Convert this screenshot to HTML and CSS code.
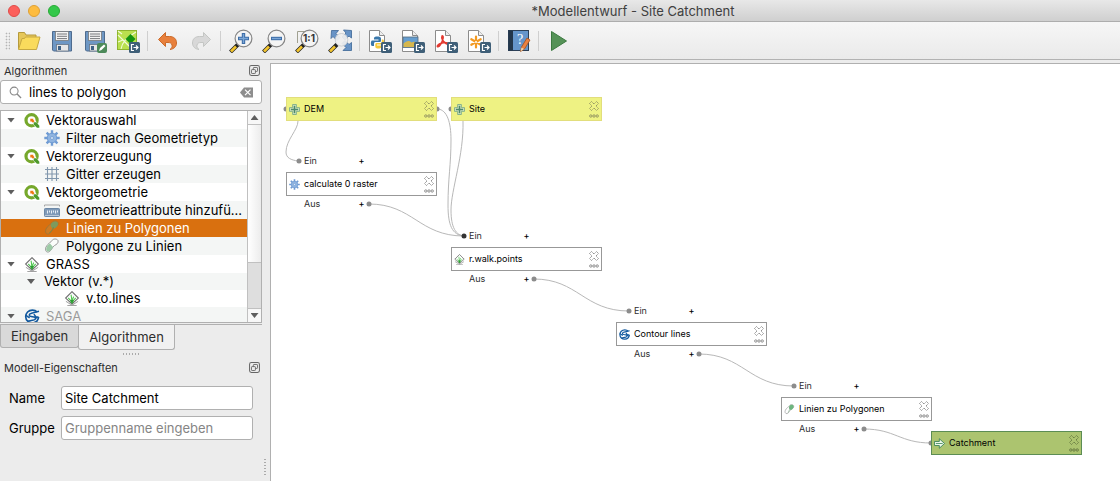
FILE: index.html
```html
<!DOCTYPE html>
<html lang="de">
<head>
<meta charset="utf-8">
<title>Modellentwurf - Site Catchment</title>
<link rel="stylesheet" href="styles.css">
</head>
<body>
<svg class="defs" aria-hidden="true">
  <defs>
    <symbol id="i-qgis" viewBox="0 0 14 14">
      <circle cx="6.6" cy="6.8" r="5.2" fill="none" stroke="#76a82c" stroke-width="3"/>
      <path d="M6.5 6.5h3.2l4.1 5.2v2h-2.6L6.5 9.2z" fill="#fff"/>
      <path d="M8.6 8.6h2.6l2.6 3.2v1.9h-2.2L8.6 10.8z" fill="#4f9a2c"/>
      <path d="M5.4 5.4h2.8v1l1.2 1.2-1.5 1.5-1.2-1.2H5.4z" fill="#ee7913"/>
    </symbol>
    <symbol id="i-gear" viewBox="0 0 16 16">
      <path d="M8 .3v15.400M.3 8h15.400M2.600 2.600l10.800 10.800M13.400 2.600L2.600 13.400" stroke="#6f9bd3" stroke-width="2.400"/>
      <circle cx="8" cy="8" r="4.800" fill="#8fb4e0" stroke="#6f9bd3"/>
      <circle cx="8" cy="8" r="1.500" fill="#d8e6f6" stroke="#6a97cf" stroke-width=".7"/>
    </symbol>
    <symbol id="i-grid" viewBox="0 0 16 16">
      <path d="M3.500 1v14M8 1v14M12.500 1v14M1 3.500h14M1 8h14M1 12.500h14" stroke="#8197ad" stroke-width="1.100" fill="none"/>
    </symbol>
    <symbol id="i-ruler" viewBox="0 0 16 16">
      <path d="M.5 4.500v-1.500h15v1.500" fill="none" stroke="#a5a5a5"/>
      <rect x=".5" y="6.500" width="15" height="8" rx=".8" fill="#7f9ab8" stroke="#6c88a6"/>
      <path d="M3.500 8.500v3M5.500 8.500v2M7.500 8.500v3M9.500 8.500v2M11.500 8.500v3M13.500 8.500v2" stroke="#f2f6fa" stroke-width=".9"/>
      <path d="M1 13.500h14" stroke="#b9c8d8"/>
    </symbol>
    <symbol id="i-line2poly" viewBox="0 0 16 16">
      <path d="M2 9c2-4 5-4.500 6-6.500 1-2 5-2 6 0 .8 2.500-1.500 4-3.500 5C8 9 7.500 13 4.500 14 2 14.500.8 12 2 9z" fill="#fff" stroke="#9a9a9a"/>
      <path d="M7.500 3.500c1-3 5.700-3 6.500-.5.800 2.500-1.500 4.500-3.500 5.600C8.500 8.500 6.500 6.500 7.500 3.500z" fill="#6db67f"/>
      <path d="M8 4.500C8.500 7 8 9 6 12.500" fill="none" stroke="#78a77e" stroke-width=".8"/>
    </symbol>
    <symbol id="i-line2poly-sel" viewBox="0 0 16 16">
      <path d="M2 9c2-4 5-4.500 6-6.500 1-2 5-2 6 0 .8 2.500-1.500 4-3.500 5C8 9 7.500 13 4.500 14 2 14.500.8 12 2 9z" fill="#cf7b23" stroke="#a37634"/>
      <path d="M7 4c1-3 6.200-3.500 7-1 .5 2.500-1.500 4.500-3.500 5.600C8.500 8.500 6 7 7 4z" fill="#7c9a5e"/>
      <path d="M9.500 7c-1 3-2.500 4-4 6" stroke="#7a8a48" fill="none"/>
    </symbol>
    <symbol id="i-poly2line" viewBox="0 0 16 16">
      <path d="M2 9c2-4 5-4.500 6-6.500 1-2 5-2 6 0 .8 2.500-1.500 4-3.500 5C8 9 7.500 13 4.500 14 2 14.500.8 12 2 9z" fill="#fbfdfb" stroke="#9a9a9a"/>
      <path d="M2.500 9.500C3.500 7 5 6 6 5.500L9 9c-1 2-2 4-4.500 4.500-2 .3-3-2-2-4z" fill="#9ccaa6"/>
    </symbol>
    <symbol id="i-grass" viewBox="0 0 16 16">
      <path d="M1.500 11l6.500 4.200 6.500-4.200M3 15.500h10" fill="none" stroke="#9a9a9a" stroke-width="1"/>
      <path d="M8 .7L14.800 7.500 8 13.800 1.200 7.500z" fill="#fbfbfb" stroke="#6a6a6a" stroke-width="1.100"/>
      <path d="M8 13C7.700 9 7.500 6 7 4M8 13c0-4 .8-5.500 1.800-7M8 13C6.500 10 5.500 8.500 4 7.500M8 13c1.500-3 2.500-4.500 4-5.500" fill="none" stroke="#4cc64c" stroke-width="1.100"/>
      <path d="M6 9.500h4l-2 4z" fill="#2d9b35"/>
    </symbol>
    <symbol id="i-saga" viewBox="0 0 16 16">
      <path d="M13.500 3.200C11 .6 6 .5 3.300 3.200.6 6 .7 10.500 3.400 13c2.700 2.600 7.500 2.500 10-.3 1-1.200 1.500-2.500 1.600-4.200" fill="none" stroke="#12599f" stroke-width="1.800"/>
      <path d="M15.500 2.500L7.500 4.500C4 5.500 4.500 7.500 7 8l3 .6c2.500.7 2.300 2.600-.3 3.200L3.500 13M1 6.500l4.500 3M10 5.500l3.500 4.500M8.500 8.500H15" fill="none" stroke="#12599f" stroke-width="1.600"/>
    </symbol>
    <symbol id="i-plus" viewBox="0 0 12 12">
      <path d="M4 .5h4V4h3.500v4H8v3.500H4V8H.5V4H4z" fill="#dcebc4" stroke="#6fa487" stroke-width=".9"/>
      <path d="M6 2v8M2 6h8" stroke="#4c886c" stroke-width="1.700"/>
    </symbol>
    <symbol id="i-arrow" viewBox="0 0 12 12">
      <path d="M.5 3.800h5.300V.8L11.500 6l-5.700 5.200v-3H.5z" fill="#eef7ea" stroke="#3f8659" stroke-width="1"/>
      <path d="M2 6h7.500" fill="none" stroke="#4f9468" stroke-width="1"/>
    </symbol>
    <symbol id="i-cross" viewBox="0 0 10 10">
      <path d="M2.500.5L5 3 7.500.5l2 2L7 5l2.500 2.500-2 2L5 7 2.500 9.500l-2-2L3 5 .5 2.500z" fill="none" stroke="currentColor" stroke-width=".9" stroke-dasharray="1.500 .5"/>
    </symbol>
    <symbol id="i-dots" viewBox="0 0 10 4">
      <g fill="none" stroke="currentColor" stroke-width=".9"><circle cx="1.800" cy="2" r="1.200"/><circle cx="5" cy="2" r="1.200"/><circle cx="8.200" cy="2" r="1.200"/></g>
    </symbol>
    <symbol id="i-float" viewBox="0 0 12 12">
      <rect x=".6" y=".6" width="10.800" height="10.800" rx="2" fill="none" stroke="#666" stroke-width="1.100"/>
      <rect x="4.700" y="2.700" width="4.600" height="4.300" rx=".7" fill="none" stroke="#666"/>
      <rect x="2.700" y="5" width="4.300" height="4.300" rx=".7" fill="#ececec" stroke="#666"/>
    </symbol>
    <symbol id="i-export" viewBox="0 0 11 11">
      <rect width="11" height="11" rx="1.500" fill="#3f5f78"/>
      <path d="M5 2.500H2.500v6H5M4.500 5.500h4M7 3.500l2 2-2 2" fill="none" stroke="#fff" stroke-width="1.200"/>
    </symbol>
    <symbol id="i-page" viewBox="0 0 24 24">
      <path d="M1.500 1.500h10l5 5v16h-15z" fill="#fff" stroke="#8c8c8c"/>
      <path d="M11.500 1.500v5h5" fill="#eee" stroke="#8c8c8c"/>
    </symbol>
    <symbol id="i-floppy" viewBox="0 0 24 24">
      <path d="M2.500 2.500h19v19.500h-18l-1-1z" fill="#6e97c4" stroke="#4e6b8e"/>
      <rect x="5.500" y="2.500" width="13" height="9" fill="#f3f3f3" stroke="#77797c" stroke-width=".8"/>
      <path d="M7 5h10M7 7.300h10M7 9.600h10" stroke="#77797c"/>
      <rect x="6.500" y="15.500" width="12" height="6.500" fill="#e7e7e7" stroke="#667588" stroke-width=".8"/>
      <rect x="8" y="17" width="3" height="4" fill="#3f6287"/>
    </symbol>
    <symbol id="i-lens" viewBox="0 0 24 24">
      <path d="M9 15.500L1.500 23" stroke="#222" stroke-width="4"/>
      <path d="M7 17.500L2 22.500" stroke="#f3c52e" stroke-width="2.600"/>
      <circle cx="14.500" cy="9.500" r="8.400" fill="#f4f4f4" fill-opacity=".9" stroke="#858585" stroke-width="1.200"/>
    </symbol>
  </defs>
</svg>

<div class="window">
  <header class="titlebar">
    <div class="lights">
      <button class="light light-close" aria-label="Schließen"></button>
      <button class="light light-min" aria-label="Minimieren"></button>
      <button class="light light-max" aria-label="Vergrößern"></button>
    </div>
    <h1 class="title">*Modellentwurf - Site Catchment</h1>
  </header>

  <nav class="toolbar" aria-label="Werkzeuge">
    <span class="handle"></span>
    <button class="tool" aria-label="Öffnen"><svg viewBox="0 0 24 24"><path d="M1.500 20V3.500h6l1.500 2.500h10v4" fill="#e6c75a" stroke="#b59a3c"/><path d="M1.500 20.500L5 9.500h2.500l1-1.500h14.500l-3.500 12.500z" fill="#fadb5c" stroke="#c7a942"/></svg></button>
    <button class="tool" aria-label="Speichern"><svg viewBox="0 0 24 24"><use href="#i-floppy"/></svg></button>
    <button class="tool" aria-label="Speichern als"><svg viewBox="0 0 24 24"><use href="#i-floppy"/><rect x="14" y="14" width="10" height="10" rx="2" fill="#4d8a5a"/><path d="M16 22l1-3 4-3.500 1.500 1.500-4 4z" fill="#fff"/></svg></button>
    <button class="tool" aria-label="Im Projekt speichern"><svg viewBox="0 0 24 24"><rect x="1.500" y="1.500" width="19" height="19" fill="#b9e04e" stroke="#8db32e"/><path d="M2 6l14 14M20 3C13 7 6 12 5 20M2 13l5-2M2 2l4 3" fill="none" stroke="#f2fadb" stroke-width="1.100"/><path d="M14.500 5l5 5-5 5-5-5z" fill="#13930f"/><use href="#i-export" x="13" y="13" width="11" height="11"/></svg></button>
    <span class="sep"></span>
    <button class="tool" aria-label="Rückgängig"><svg viewBox="0 0 24 24"><path d="M2.500 10.500L9.500 3.500v4h4c4.500 0 7 2.500 7 6.500 0 3.500-2.500 6-6.500 6.500 2-1.500 2.500-3 2-4.500-.5-2-2-2.500-4-2.500H9.500v4z" fill="#e8803c" stroke="#cb6a2a"/></svg></button>
    <button class="tool" aria-label="Wiederherstellen"><svg viewBox="0 0 24 24"><path d="M21.500 10.500L14.500 3.500v4h-4c-4.500 0-7 2.500-7 6.500 0 3.500 2.500 6 6.500 6.500-2-1.500-2.500-3-2-4.500.5-2 2-2.500 4-2.500h2.500v4z" fill="#d8d8d8" stroke="#c4c6c4"/></svg></button>
    <span class="sep"></span>
    <button class="tool" aria-label="Hineinzoomen"><svg viewBox="0 0 24 24"><use href="#i-lens"/><path d="M14.500 4v11M9 9.500h11" stroke="#3e6ea8" stroke-width="3.400"/><path d="M14.500 5v9M10 9.500h9" stroke="#7ba6d6" stroke-width="1.300"/></svg></button>
    <button class="tool" aria-label="Herauszoomen"><svg viewBox="0 0 24 24"><use href="#i-lens"/><path d="M9 9.500h11" stroke="#3e6ea8" stroke-width="3.400"/><path d="M10 9.500h9" stroke="#7ba6d6" stroke-width="1.300"/></svg></button>
    <button class="tool" aria-label="Zoom 1:1"><svg viewBox="0 0 24 24"><path d="M2.500 14V2.500H15" fill="none" stroke="#a0a090"/><use href="#i-lens"/><text x="14" y="13" class="ratio">1:1</text></svg></button>
    <button class="tool" aria-label="Volle Ausdehnung"><svg viewBox="0 0 24 24"><path d="M3.500 1.500h7l-2.500 3 4 4-3 3-4-4-2 2zM23.500 1.500v7.500l-2.500-2-4 4-3-3 4-4-2.500-3zM23.500 21.500H15l3-3-4-4 3-3 4 4 2.500-2z" fill="#6793c6" stroke="#476f9d" stroke-width=".9"/><path d="M9 15.500L1.500 23" stroke="#222" stroke-width="4"/><path d="M7 17.500L2 22.500" stroke="#f3c52e" stroke-width="2.600"/><circle cx="13.500" cy="10.800" r="6.300" fill="#efefef" fill-opacity=".92" stroke="#c4c8cc" stroke-width=".8"/></svg></button>
    <span class="sep"></span>
    <button class="tool" aria-label="Als Python exportieren"><svg viewBox="0 0 24 24"><use href="#i-page"/><path d="M9 7.500c-3 0-3 1-3 3h4.500v1H4c-1.500.5-1.500 5 0 5.500h2v-2.500c0-1 .8-1.500 1.500-1.500h4c1 0 1.500-.5 1.500-1.500v-2c0-1.500-1.500-2-4-2z" fill="#3b78ab"/><path d="M10.500 19.500c3 0 3-1 3-3H9v-1h6c1.500-.5 1.500-4.500 0-5h-1.200v2c0 1-.8 1.500-1.500 1.500h-3.500c-1 0-1.500.5-1.500 1.500v2c0 1.500 1 2 3.200 2z" fill="#f5ca3c"/><use href="#i-export" x="13" y="13" width="11" height="11"/></svg></button>
    <button class="tool" aria-label="Als Bild exportieren"><svg viewBox="0 0 24 24"><use href="#i-page"/><rect x="2" y="8" width="15" height="10.500" fill="#669ed0" stroke="#566a7b" stroke-width=".8"/><path d="M2.500 14.500c3-3 6-3.500 8-1 2-1 4-1 6 0V18h-14z" fill="#d6b74d"/><use href="#i-export" x="13" y="13" width="11" height="11"/></svg></button>
    <button class="tool" aria-label="Als PDF exportieren"><svg viewBox="0 0 24 24"><use href="#i-page"/><path d="M8 7c2-1 1.500 4-1.500 8.500-1.500 2.500-4 3-3 1 2-2.500 7-3.500 10-2.500 2 1 .5 2-1.500.7C9 13 7 9 8 7z" fill="none" stroke="#e33a31" stroke-width="1.500"/><use href="#i-export" x="13" y="13" width="11" height="11"/></svg></button>
    <button class="tool" aria-label="Als SVG exportieren"><svg viewBox="0 0 24 24"><use href="#i-page"/><path d="M9 7.500v11M4.300 10.200l9.400 5.600M13.700 10.200l-9.400 5.600" stroke="#f39a22" stroke-width="2.200" stroke-linecap="round"/><circle cx="9" cy="13" r="1" fill="#fff"/><use href="#i-export" x="13" y="13" width="11" height="11"/></svg></button>
    <span class="sep"></span>
    <button class="tool" aria-label="Hilfe bearbeiten"><svg viewBox="0 0 24 24"><rect x="1.500" y="1.500" width="20" height="20" fill="#6595ca" stroke="#2c4058"/><rect x="1.500" y="1.500" width="4.500" height="20" fill="#23364a"/><text x="13" y="15" class="help-mark">?</text><path d="M13.500 22.500l1-4.500 5.500-9 3 2-5.500 9z" fill="#ec8140" stroke="#a5501c" stroke-width=".8"/><path d="M13.500 22.500l1-4 2.500 1.500z" fill="#ead7b5"/></svg></button>
    <span class="sep"></span>
    <button class="tool" aria-label="Modell ausführen"><svg viewBox="0 0 24 24"><path d="M4.500 2.500v19L19.500 12z" fill="#559257" stroke="#3c7a40"/></svg></button>
  </nav>

  <main class="workspace">
    <aside class="sidebar">
      <section>
        <div class="dock-head">
          <h2 class="dock-title">Algorithmen</h2>
          <button class="float-btn" aria-label="Algorithmen ablösen"><svg viewBox="0 0 12 12"><use href="#i-float"/></svg></button>
        </div>
        <div class="search">
          <svg class="search-icon" viewBox="0 0 14 14"><circle cx="5.500" cy="5.500" r="4.300" fill="none" stroke="#888" stroke-width="1.100"/><path d="M8.700 8.700L13 13" stroke="#888" stroke-width="1.400"/></svg>
          <input class="search-input" type="text" value="lines to polygon" aria-label="Algorithmen suchen">
          <button class="clear" aria-label="Suche löschen"><svg viewBox="0 0 13 11"><path d="M4 .5h9v10H4L0 5.500z" fill="#8e8e8e"/><path d="M5 2.700l5.500 5.500M10.500 2.700L5 8.200" stroke="#fff" stroke-width="1.200"/></svg></button>
        </div>
        <div class="tree-frame">
          <ul class="tree" role="tree" aria-label="Algorithmen">
            <li class="row" role="treeitem" aria-expanded="true"><span class="twisty"></span><svg class="icon icon-group"><use href="#i-qgis"/></svg>Vektorauswahl</li>
            <li class="row leaf alt" role="treeitem"><svg class="icon"><use href="#i-gear"/></svg>Filter nach Geometrietyp</li>
            <li class="row" role="treeitem" aria-expanded="true"><span class="twisty"></span><svg class="icon icon-group"><use href="#i-qgis"/></svg>Vektorerzeugung</li>
            <li class="row leaf alt" role="treeitem"><svg class="icon"><use href="#i-grid"/></svg>Gitter erzeugen</li>
            <li class="row" role="treeitem" aria-expanded="true"><span class="twisty"></span><svg class="icon icon-group"><use href="#i-qgis"/></svg>Vektorgeometrie</li>
            <li class="row leaf alt" role="treeitem"><svg class="icon"><use href="#i-ruler"/></svg>Geometrieattribute hinzufü...</li>
            <li class="row leaf selected" role="treeitem" aria-selected="true"><svg class="icon"><use href="#i-line2poly-sel"/></svg>Linien zu Polygonen</li>
            <li class="row leaf alt" role="treeitem"><svg class="icon"><use href="#i-poly2line"/></svg>Polygone zu Linien</li>
            <li class="row" role="treeitem" aria-expanded="true"><span class="twisty"></span><svg class="icon icon-group"><use href="#i-grass"/></svg>GRASS</li>
            <li class="row short branch alt" role="treeitem" aria-expanded="true"><span class="twisty"></span>Vektor (v.*)</li>
            <li class="row short deep" role="treeitem"><svg class="icon icon-group"><use href="#i-grass"/></svg>v.to.lines</li>
            <li class="row disabled alt" role="treeitem" aria-expanded="true"><span class="twisty"></span><svg class="icon icon-group"><use href="#i-saga"/></svg>SAGA</li>
          </ul>
          <div class="scrollbar">
            <button class="scroll-btn" aria-label="Nach oben"><span class="tri-up"></span></button>
            <div class="scroll-thumb"></div>
            <div class="scroll-groove"></div>
            <button class="scroll-btn scroll-down" aria-label="Nach unten"><span class="twisty"></span></button>
          </div>
        </div>
        <div class="tabs" role="tablist">
          <button class="tab" role="tab" aria-selected="false">Eingaben</button>
          <button class="tab tab-active" role="tab" aria-selected="true">Algorithmen</button>
        </div>
        <div class="split-row"></div>
      </section>
      <section class="props">
        <div class="dock-head">
          <h2 class="dock-title">Modell-Eigenschaften</h2>
          <button class="float-btn" aria-label="Modell-Eigenschaften ablösen"><svg viewBox="0 0 12 12"><use href="#i-float"/></svg></button>
        </div>
        <form class="form">
          <label for="model-name">Name</label>
          <input class="field" id="model-name" type="text" value="Site Catchment">
          <label for="model-group">Gruppe</label>
          <input class="field" id="model-group" type="text" placeholder="Gruppenname eingeben">
        </form>
      </section>
      <span class="split-col"></span>
    </aside>

    <section class="canvas" aria-label="Modell">
      <svg class="wires" aria-hidden="true">
        <g transform="translate(-271 -64)">
          <g fill="none" stroke="#b8b8b8">
            <path d="M298 121C298 130 286 140 286 152C286 158 291 160 298 161"/>
            <path d="M438 109C447 110 451 122 451 140C451 165 448 178 448 205C448 225 452 235 464 236"/>
            <path d="M463 121C464 155 451 190 451 210C451 228 456 235 464 236"/>
            <path d="M369 204C413 204 419 236 464 236"/>
            <path d="M534 279C578 279 584 311 629 311"/>
            <path d="M699 354C743 354 749 386 794 386"/>
            <path d="M864 429C895 429 900 443 931 443"/>
          </g>
          <g fill="#8c8c8c">
            <circle cx="286" cy="109" r="2.500"/><circle cx="437" cy="109" r="2.500"/><circle cx="451" cy="109" r="2.500"/><circle cx="931" cy="443" r="2.500"/>
            <circle cx="299" cy="161" r="2.500"/><circle cx="369" cy="204" r="2.500"/><circle cx="534" cy="279" r="2.500"/>
            <circle cx="629" cy="311" r="2.500"/><circle cx="699" cy="354" r="2.500"/><circle cx="794" cy="386" r="2.500"/><circle cx="864" cy="429" r="2.500"/>
            <circle cx="464" cy="236" r="2.500" fill="#333"/>
          </g>
        </g>
      </svg>

      <article class="node node-dem">
        <div class="box box-input"><svg class="node-icon"><use href="#i-plus"/></svg><span class="node-name">DEM</span>
          <span class="node-actions"><button class="mini" aria-label="DEM löschen"><svg class="cross"><use href="#i-cross"/></svg></button><button class="mini" aria-label="DEM bearbeiten"><svg class="dots"><use href="#i-dots"/></svg></button></span></div>
      </article>
      <article class="node node-site">
        <div class="box box-input"><svg class="node-icon"><use href="#i-plus"/></svg><span class="node-name">Site</span>
          <span class="node-actions"><button class="mini" aria-label="Site löschen"><svg class="cross"><use href="#i-cross"/></svg></button><button class="mini" aria-label="Site bearbeiten"><svg class="dots"><use href="#i-dots"/></svg></button></span></div>
      </article>
      <article class="node node-raster">
        <div class="port port-in"><span>Ein</span><button class="expand" aria-label="Eingänge zeigen">+</button></div>
        <div class="box"><svg class="node-icon"><use href="#i-gear"/></svg><span class="node-name">calculate 0 raster</span>
          <span class="node-actions"><button class="mini" aria-label="Löschen"><svg class="cross"><use href="#i-cross"/></svg></button><button class="mini" aria-label="Bearbeiten"><svg class="dots"><use href="#i-dots"/></svg></button></span></div>
        <div class="port port-out"><span>Aus</span><button class="expand" aria-label="Ausgänge zeigen">+</button></div>
      </article>
      <article class="node node-walk">
        <div class="port port-in"><span>Ein</span><button class="expand" aria-label="Eingänge zeigen">+</button></div>
        <div class="box"><svg class="node-icon"><use href="#i-grass"/></svg><span class="node-name">r.walk.points</span>
          <span class="node-actions"><button class="mini" aria-label="Löschen"><svg class="cross"><use href="#i-cross"/></svg></button><button class="mini" aria-label="Bearbeiten"><svg class="dots"><use href="#i-dots"/></svg></button></span></div>
        <div class="port port-out"><span>Aus</span><button class="expand" aria-label="Ausgänge zeigen">+</button></div>
      </article>
      <article class="node node-contour">
        <div class="port port-in"><span>Ein</span><button class="expand" aria-label="Eingänge zeigen">+</button></div>
        <div class="box"><svg class="node-icon"><use href="#i-saga"/></svg><span class="node-name">Contour lines</span>
          <span class="node-actions"><button class="mini" aria-label="Löschen"><svg class="cross"><use href="#i-cross"/></svg></button><button class="mini" aria-label="Bearbeiten"><svg class="dots"><use href="#i-dots"/></svg></button></span></div>
        <div class="port port-out"><span>Aus</span><button class="expand" aria-label="Ausgänge zeigen">+</button></div>
      </article>
      <article class="node node-polygon">
        <div class="port port-in"><span>Ein</span><button class="expand" aria-label="Eingänge zeigen">+</button></div>
        <div class="box"><svg class="node-icon"><use href="#i-line2poly"/></svg><span class="node-name">Linien zu Polygonen</span>
          <span class="node-actions"><button class="mini" aria-label="Löschen"><svg class="cross"><use href="#i-cross"/></svg></button><button class="mini" aria-label="Bearbeiten"><svg class="dots"><use href="#i-dots"/></svg></button></span></div>
        <div class="port port-out"><span>Aus</span><button class="expand" aria-label="Ausgänge zeigen">+</button></div>
      </article>
      <article class="node node-catchment">
        <div class="box box-output"><svg class="node-icon"><use href="#i-arrow"/></svg><span class="node-name">Catchment</span>
          <span class="node-actions"><button class="mini" aria-label="Catchment löschen"><svg class="cross"><use href="#i-cross"/></svg></button><button class="mini" aria-label="Catchment bearbeiten"><svg class="dots"><use href="#i-dots"/></svg></button></span></div>
      </article>
    </section>
  </main>
</div>
</body>
</html>
```
FILE: styles.css
```css
* { box-sizing: border-box; }

body {
  margin: 0;
  background: #ececec;
  color: #000;
  font: 13px/18px Inter, "Liberation Sans", sans-serif;
}

button {
  padding: 0;
  border: 0;
  background: none;
  color: inherit;
  font: inherit;
}

input { font: inherit; color: inherit; }
svg { display: block; }
.defs { position: absolute; width: 0; height: 0; }

.window {
  display: flex;
  flex-direction: column;
  min-height: 100vh;
  overflow: hidden;
}

/* Title bar */
.titlebar {
  display: flex;
  align-items: center;
  height: 22px;
  padding: 0 8px;
  border-bottom: 1px solid #adadad;
  background: linear-gradient(#e8e8e8, #cfcfcf);
}
.lights { display: flex; flex: none; gap: 8px; width: 146px; }
.light { width: 12px; height: 12px; border: 1px solid; border-radius: 50%; }
.light-close { background: #fc605c; border-color: #e04b48; }
.light-min { background: #fdbc40; border-color: #dfa034; }
.light-max { background: #34c84a; border-color: #27aa35; }
.title {
  flex: 1;
  margin: 0;
  font-size: 13px;
  font-weight: 400;
  text-align: center;
  color: #404040;
}

/* Toolbar */
.toolbar {
  display: flex;
  align-items: center;
  height: 38px;
  padding-left: 5px;
  border-bottom: 1px solid #b2b2b2;
  background: linear-gradient(#f6f6f6, #eaeaea);
}
.handle {
  width: 5px;
  height: 18px;
  margin-right: 2px;
  background: radial-gradient(circle, #b5b5b5 40%, transparent 50%) 0 0 / 3px 3px;
}
.tool { display: flex; justify-content: center; flex: none; width: 33px; }
.tool svg { width: 24px; height: 24px; }
.sep { flex: none; width: 1px; height: 20px; margin: 0 3px; background: #cfcfcf; }
.ratio { font-size: 10px; font-weight: 700; text-anchor: middle; fill: #333; }
.help-mark { font: 14px "Liberation Serif", serif; text-anchor: middle; fill: #fff; }

.workspace { display: flex; flex: 1; }

/* Sidebar */
.sidebar { position: relative; flex: none; width: 270px; padding: 1px 8px 0 0; }
.dock-head {
  display: flex;
  align-items: center;
  justify-content: space-between;
  height: 19px;
  padding: 0 2px 0 4px;
}
.dock-title { margin: 0; font-size: 11px; font-weight: 400; color: #2e2e2e; }
.float-btn svg { width: 11px; height: 11px; }

.search {
  display: flex;
  align-items: center;
  height: 24px;
  margin-bottom: 6px;
  padding: 0 8px;
  border: 1px solid #b0b0b0;
  border-radius: 3px;
  background: #fff;
}
.search-icon { width: 13px; height: 13px; }
.search-input { flex: 1; min-width: 0; margin-left: 7px; padding: 0; border: 0; outline: 0; background: none; }
.clear svg { width: 13px; height: 11px; }

.tree-frame {
  display: flex;
  height: 213px;
  border: 1px solid #b0b0b0;
  background: #fff;
}
.tree { flex: 1; min-width: 0; margin: 0; padding: 0; overflow: hidden; list-style: none; }
.row { display: flex; align-items: center; height: 18px; padding-left: 6px; white-space: nowrap; }
.short { height: 17px; line-height: 17px; }
.leaf { padding-left: 43px; }
.branch { padding-left: 26px; }
.deep { padding-left: 63px; }
.alt { background: #f4f6f5; }
.selected { background: #d9700f; color: #fff; }
.disabled { color: #9b9b9b; }
.twisty {
  width: 8px;
  height: 5px;
  background: #5e5e5e;
  clip-path: polygon(0 0, 100% 0, 50% 100%);
}
.icon { flex: none; width: 16px; height: 16px; margin-right: 6px; }
.twisty + .icon { margin-left: 9px; }
.icon-group { height: 15px; }
.branch .twisty { margin-right: 9px; }

.scrollbar { display: flex; flex-direction: column; width: 14px; border-left: 1px solid #c0c0c0; }
.scroll-btn { display: flex; align-items: center; justify-content: center; height: 14px; background: #f7f7f7; border-bottom: 1px solid #c0c0c0; }
.scroll-down { border-top: 1px solid #c0c0c0; border-bottom: 0; }
.tri-up { width: 8px; height: 5px; background: #5e5e5e; clip-path: polygon(50% 0, 100% 100%, 0 100%); }
.scroll-thumb { flex: 3; border-bottom: 1px solid #c0c0c0; background: linear-gradient(90deg, #fff, #ececec); }
.scroll-groove { flex: 1; background: #dedede; }

.tabs { display: flex; align-items: flex-start; margin-top: 1px; border-top: 1px solid #b0b0b0; }
.tab {
  height: 23px;
  padding: 0 10px;
  border: 1px solid #b0b0b0;
  border-top: 0;
  border-radius: 0 0 3px 3px;
  background: #d9d9d9;
  color: #2e2e2e;
}
.tab-active { height: 25px; margin-left: -1px; background: #f1f1f1; }
.split-row {
  width: 18px;
  height: 2px;
  margin: 3px auto;
  background: radial-gradient(circle, #aaa 40%, transparent 50%) 0 0 / 3px 2px;
}
.form {
  display: grid;
  grid-template-columns: 44px 1fr;
  align-items: center;
  gap: 6px 8px;
  margin: 0;
  padding: 9px 9px 0;
}
.field {
  width: 100%;
  height: 24px;
  padding: 0 3px;
  border: 1px solid #b0b0b0;
  border-radius: 3px;
  background: #fff;
}
.field::placeholder { color: #858585; opacity: 1; }
.split-col {
  position: absolute;
  right: 4px;
  bottom: 5px;
  width: 2px;
  height: 18px;
  background: radial-gradient(circle, #aaa 40%, transparent 50%) 0 0 / 2px 3px;
}

/* Model canvas */
.canvas {
  position: relative;
  flex: 1;
  margin-top: 3px;
  border-top: 1px solid #b0b0b0;
  border-left: 1px solid #b0b0b0;
  background: #fff;
  font-size: 9px;
  line-height: 12px;
}
.wires { position: absolute; inset: 0; width: 100%; height: 100%; }
.node { position: absolute; width: 151px; }
.node-dem { left: 15px; top: 33px; }
.node-site { left: 180px; top: 33px; }
.node-raster { left: 15px; top: 86px; }
.node-walk { left: 180px; top: 161px; }
.node-contour { left: 345px; top: 236px; }
.node-polygon { left: 510px; top: 311px; }
.node-catchment { left: 660px; top: 367px; }

.box {
  display: flex;
  align-items: center;
  height: 24px;
  padding: 0 2px;
  border: 1px solid #989898;
  background: #fff;
}
.box-input { border-color: #e2de7c; background: #eef283; }
.box-output { border-color: #5c8d54; background: #acc46f; }
.node-icon { flex: none; width: 11px; height: 11px; margin-right: 4px; }
.node-name { flex: 1; }
.node-actions { display: flex; flex-direction: column; gap: 3px; color: #868686; }
.box-input .node-actions { color: #8f9060; }
.box-output .node-actions { color: #64773f; }
.cross { width: 10px; height: 10px; }
.dots { width: 10px; height: 4px; }

.port { display: grid; grid-template-columns: 54px auto; justify-content: start; align-items: center; padding-left: 18px; color: #2e2e2e; }
.port-in { height: 22px; }
.port-out { height: 16px; }
.expand { width: 7px; line-height: 12px; font-weight: 500; color: #000; }
```
